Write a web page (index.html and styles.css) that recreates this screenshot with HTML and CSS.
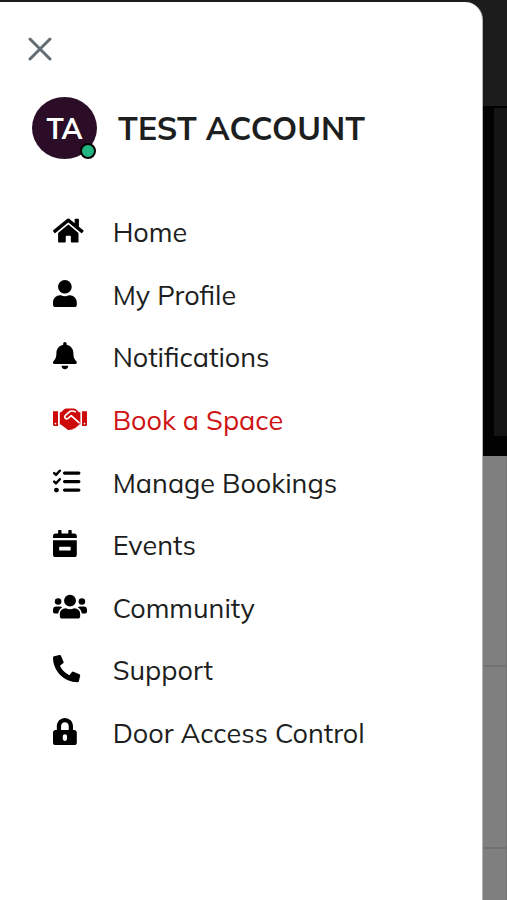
FILE: index.html
```html
<!DOCTYPE html>
<html lang="en">
<head>
    <meta charset="UTF-8">
    <meta name="viewport" content="width=device-width, initial-scale=1.0">
    <title>Account Menu</title>
    <link rel="stylesheet" href="styles.css">
</head>
<body>
    <aside class="drawer">
        <button class="close-btn" aria-label="Close menu">
            <svg viewBox="0 0 24 24"><path d="M2 2l20 20M22 2L2 22"/></svg>
        </button>

        <div class="account">
            <div class="avatar">
                <span>TA</span>
                <i class="status"></i>
            </div>
            <h1>TEST ACCOUNT</h1>
        </div>

        <nav>
            <ul class="menu">
                <li><a href="#">
                    <svg class="icon" viewBox="0 0 640 512"><path d="M280.37 148.26L96 300.11V464a16 16 0 0 0 16 16l112.06-.29a16 16 0 0 0 15.92-16V368a16 16 0 0 1 16-16h64a16 16 0 0 1 16 16v95.64a16 16 0 0 0 16 16.05L464 480a16 16 0 0 0 16-16V300L295.67 148.26a12.19 12.19 0 0 0-15.3 0zM571.6 251.47L488 182.56V44.05a12 12 0 0 0-12-12h-56a12 12 0 0 0-12 12v72.61L318.47 43a48 48 0 0 0-61 0L4.34 251.47a12 12 0 0 0-1.6 16.9l25.5 31A12 12 0 0 0 45.15 301l235.22-193.74a12.19 12.19 0 0 1 15.3 0L530.9 301a12 12 0 0 0 16.9-1.6l25.5-31a12 12 0 0 0-1.7-16.93z"/></svg>
                    <span>Home</span>
                </a></li>
                <li><a href="#">
                    <svg class="icon" viewBox="0 0 640 512"><path d="M224 256c70.7 0 128-57.3 128-128S294.7 0 224 0 96 57.3 96 128s57.3 128 128 128zm89.6 32h-16.7c-22.2 10.2-46.9 16-72.9 16s-50.6-5.8-72.9-16h-16.7C60.2 288 0 348.2 0 422.4V464c0 26.5 21.5 48 48 48h352c26.5 0 48-21.5 48-48v-41.6c0-74.2-60.2-134.4-134.4-134.4z"/></svg>
                    <span>My Profile</span>
                </a></li>
                <li><a href="#">
                    <svg class="icon" viewBox="0 0 640 512"><path d="M224 512c35.32 0 63.97-28.65 63.97-64H160.03c0 35.35 28.65 64 63.97 64zm215.39-149.71c-19.32-20.76-55.47-51.99-55.47-154.29 0-77.7-54.48-139.9-127.94-155.16V32c0-17.67-14.32-32-31.98-32s-31.98 14.33-31.98 32v20.84C118.56 68.1 64.08 130.3 64.08 208c0 102.3-36.15 133.53-55.47 154.29-6 6.45-8.66 14.16-8.61 21.71.11 16.4 12.98 32 32.1 32h383.8c19.12 0 32-15.6 32.1-32 .05-7.55-2.61-15.27-8.61-21.71z"/></svg>
                    <span>Notifications</span>
                </a></li>
                <li><a href="#" class="active">
                    <svg class="icon" viewBox="0 0 640 512">
                        <path d="M0 120h94v276H24q-24 0-24-24zM546 120h94v252q0 24-24 24h-70z"/>
                        <path d="M128 136h22l62-58q16-14 36-14h146q22 0 38 14l58 58h26v232h-28q-10 34-48 44-16 36-54 32-24 32-58 18-38 24-70-8L148 366h-20z"/>
                        <path class="cut" d="M420 126q-50-22-100-8l-86 78q-26 26-4 52t54 4l58-52 148 134"/>
                        <circle class="hole" cx="46" cy="350" r="17"/>
                        <circle class="hole" cx="594" cy="350" r="17"/>
                    </svg>
                    <span>Book a Space</span>
                </a></li>
                <li><a href="#">
                    <svg class="icon" viewBox="0 0 640 512">
                        <path class="bar" d="M216 96h272M216 256h272M216 416h272"/>
                        <path class="tick" d="M22 96l34 34 72-78M22 256l34 34 72-78"/>
                        <circle cx="64" cy="416" r="46"/>
                    </svg>
                    <span>Manage Bookings</span>
                </a></li>
                <li><a href="#">
                    <svg class="icon" viewBox="0 0 640 512"><path fill-rule="evenodd" d="M0 152v-40q0-48 48-48h48V16q0-16 16-16h32q16 0 16 16v48h128V16q0-16 16-16h32q16 0 16 16v48h48q48 0 48 48v40zM0 192h448v272q0 48-48 48H48q-48 0-48-48zM128 316q-12 0-12 12v48q0 12 12 12h192q12 0 12-12v-48q0-12-12-12z"/></svg>
                    <span>Events</span>
                </a></li>
                <li><a href="#">
                    <svg class="icon" viewBox="0 0 640 512">
                        <circle cx="320" cy="144" r="112"/>
                        <circle cx="96" cy="160" r="62"/>
                        <circle cx="544" cy="160" r="62"/>
                        <path d="M243 288q77 34 154 0 115 6 115 115v29q0 48-48 48H176q-48 0-48-48v-29q0-109 115-115zM64 256h64q26 0 45 19-65 36-75 109H32q-32 0-32-32v-32q0-64 64-64zM512 256h64q64 0 64 64v32q0 32-32 32h-66q-10-73-75-109 19-19 45-19z"/>
                    </svg>
                    <span>Community</span>
                </a></li>
                <li><a href="#">
                    <svg class="icon" viewBox="0 0 640 512"><path d="M497.39 361.8l-112-48a24 24 0 0 0-28 6.9l-49.6 60.6A370.66 370.66 0 0 1 130.6 204.11l60.6-49.6a23.94 23.94 0 0 0 6.9-28l-48-112A24.16 24.16 0 0 0 122.6.61l-104 24A24 24 0 0 0 0 48c0 256.5 207.9 464 464 464a24 24 0 0 0 23.4-18.6l24-104a24.29 24.29 0 0 0-14.01-27.6z"/></svg>
                    <span>Support</span>
                </a></li>
                <li><a href="#">
                    <svg class="icon" viewBox="0 0 640 512"><path fill-rule="evenodd" d="M400 224h-24v-72C376 68.2 307.8 0 224 0S72 68.2 72 152v72H48c-26.5 0-48 21.5-48 48v192c0 26.5 21.5 48 48 48h352c26.5 0 48-21.5 48-48V272c0-26.5-21.5-48-48-48zm-104 0H152v-72c0-39.7 32.3-72 72-72s72 32.3 72 72v72zM264 392c0 22.1-17.9 40-40 40s-40-17.9-40-40v-48c0-22.1 17.9-40 40-40s40 17.9 40 40v48z"/></svg>
                    <span>Door Access Control</span>
                </a></li>
            </ul>
        </nav>
    </aside>

    <!-- dimmed page behind the drawer -->
    <main class="page">
        <div class="topbar"></div>
        <div class="hero"><div class="hero-image"></div></div>
        <div class="row row-first"></div>
        <div class="row row-second"></div>
        <div class="row row-last"></div>
    </main>
</body>
</html>
```
FILE: styles.css
```css
* {
    box-sizing: border-box;
    margin: 0;
    padding: 0;
}

body {
    display: flex;
    height: 900px;
    overflow: hidden;
    background-color: #1c1c1c;
    font-family: Mulish, Lato, sans-serif;
    color: #1c1e20;
}

.drawer {
    width: 483px;
    height: 898px;
    margin-top: 2px;
    padding: 35px 0 0 28px;
    background-color: #fff;
    border-right: 1px solid #b4b4b4;
    border-radius: 0 18px 0 0;
    flex-shrink: 0;
}

.close-btn {
    display: block;
    width: 24px;
    height: 24px;
    border: none;
    background: none;
}

.close-btn svg {
    display: block;
    width: 24px;
    height: 24px;
    fill: none;
    stroke: #626c73;
    stroke-width: 3;
    stroke-linecap: round;
}

.account {
    display: flex;
    align-items: center;
    gap: 21px;
    margin: 36px 0 0 4px;
}

.avatar {
    position: relative;
    display: flex;
    align-items: center;
    justify-content: center;
    width: 65px;
    height: 62px;
    border-radius: 50%;
    background-color: #2b0d27;
    color: #fff;
    font-size: 28px;
    font-weight: 700;
}

.status {
    position: absolute;
    right: 1px;
    bottom: 0;
    width: 16px;
    height: 16px;
    border: 2px solid #000;
    border-radius: 50%;
    background-color: #22b57f;
}

h1 {
    font-size: 32px;
    font-weight: 700;
    letter-spacing: 0.1px;
    white-space: nowrap;
}

.menu {
    margin-top: 42px;
    list-style: none;
}

.menu li {
    height: 62.6px;
}

.menu a {
    display: flex;
    align-items: center;
    height: 62.6px;
    padding-left: 24.5px;
    color: #1c1e20;
    font-size: 27px;
    text-decoration: none;
    white-space: nowrap;
}

.icon {
    width: 34px;
    height: 27.2px;
    margin: 0 26.2px 3px 0;
    fill: #000;
    flex-shrink: 0;
}

.menu .active {
    color: #cf1212;
}

.active .icon {
    fill: #cc0a0a;
}

.cut {
    fill: none;
    stroke: #fff;
    stroke-width: 32;
    stroke-linecap: round;
    stroke-linejoin: round;
}

.icon .hole {
    fill: #fff;
}

.bar,
.tick {
    fill: none;
    stroke: #000;
    stroke-linecap: round;
    stroke-linejoin: round;
}

.bar {
    stroke-width: 58;
}

.tick {
    stroke-width: 46;
}

.page {
    display: flex;
    flex-direction: column;
    flex: 1;
}

.topbar {
    height: 106px;
    background-color: #1c1c1c;
}

.hero {
    height: 350px;
    padding: 2px 0 20px 11px;
    background-color: #030202;
}

.hero-image {
    height: 328px;
    background-color: #141415;
}

.row {
    background-color: #7f7f7f;
    border-bottom: 2px solid #717171;
    border-right: 1px solid #757575;
}

.row-first {
    height: 211px;
}

.row-second {
    height: 182px;
}

.row-last {
    flex: 1;
    border-bottom: none;
}
```
